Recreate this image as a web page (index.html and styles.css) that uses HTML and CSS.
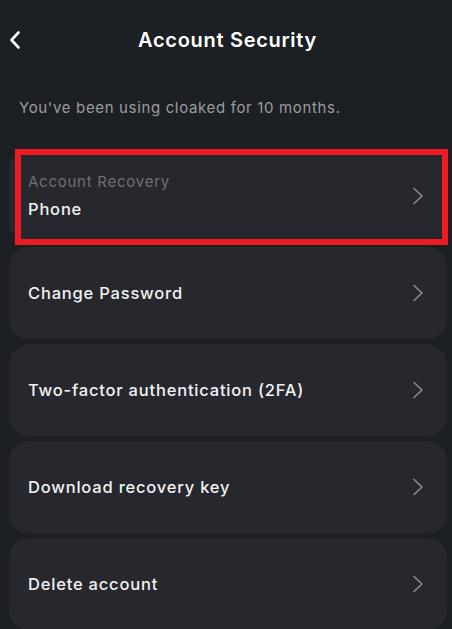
FILE: index.html
```html
<!DOCTYPE html>
<html lang="en">
<head>
<meta charset="utf-8">
<title>Account Security</title>
<link rel="stylesheet" href="styles.css">
</head>
<body>
<div class="screen">
  <header class="topbar">
    <button class="back" aria-label="Back">
      <svg width="14" height="20" viewBox="0 0 14 20"><path d="M10.5 2.5 L3.5 10 L10.5 17.5" fill="none" stroke="#ffffff" stroke-width="2.6" stroke-linecap="round" stroke-linejoin="round"/></svg>
    </button>
    <h1 class="title">Account Security</h1>
  </header>
  <p class="note">You've been using cloaked for 10 months.</p>
  <ul class="list">
    <li class="item item-highlight">
      <div class="item-text">
        <span class="item-label">Account Recovery</span>
        <span class="item-title">Phone</span>
      </div>
      <svg class="chev" width="12" height="18" viewBox="0 0 12 18"><path d="M2 1.5 L10 9 L2 16.5" fill="none" stroke="#8b8d91" stroke-width="1.6" stroke-linecap="round" stroke-linejoin="round"/></svg>
      <span class="marker"></span>
    </li>
    <li class="item">
      <div class="item-text"><span class="item-title">Change Password</span></div>
      <svg class="chev" width="12" height="18" viewBox="0 0 12 18"><path d="M2 1.5 L10 9 L2 16.5" fill="none" stroke="#8b8d91" stroke-width="1.6" stroke-linecap="round" stroke-linejoin="round"/></svg>
    </li>
    <li class="item">
      <div class="item-text"><span class="item-title">Two-factor authentication (2FA)</span></div>
      <svg class="chev" width="12" height="18" viewBox="0 0 12 18"><path d="M2 1.5 L10 9 L2 16.5" fill="none" stroke="#8b8d91" stroke-width="1.6" stroke-linecap="round" stroke-linejoin="round"/></svg>
    </li>
    <li class="item">
      <div class="item-text"><span class="item-title">Download recovery key</span></div>
      <svg class="chev" width="12" height="18" viewBox="0 0 12 18"><path d="M2 1.5 L10 9 L2 16.5" fill="none" stroke="#8b8d91" stroke-width="1.6" stroke-linecap="round" stroke-linejoin="round"/></svg>
    </li>
    <li class="item">
      <div class="item-text"><span class="item-title">Delete account</span></div>
      <svg class="chev" width="12" height="18" viewBox="0 0 12 18"><path d="M2 1.5 L10 9 L2 16.5" fill="none" stroke="#8b8d91" stroke-width="1.6" stroke-linecap="round" stroke-linejoin="round"/></svg>
    </li>
  </ul>
</div>
</body>
</html>
```
FILE: styles.css
```css
html, body {
  margin: 0;
  padding: 0;
  background: #1c1f23;
}
body {
  font-family: "Inter", "Noto Sans", "DejaVu Sans", sans-serif;
  color: #ffffff;
  overflow: hidden;
}
.screen {
  width: 452px;
  height: 629px;
  overflow: hidden;
}
.topbar {
  height: 80px;
  display: flex;
  align-items: center;
  justify-content: center;
  position: relative;
}
.back {
  position: absolute;
  left: 8px;
  top: 30px;
  background: none;
  border: 0;
  padding: 0;
  width: 14px;
  height: 20px;
  display: flex;
}
.title {
  margin: 0;
  font-size: 20px;
  font-weight: 600;
  letter-spacing: 0.7px;
  padding-left: 3px;
}
.note {
  margin: 18px 0 0 19px;
  height: 20px;
  line-height: 20px;
  font-size: 15px;
  color: #9b9c9f;
  letter-spacing: 0.65px;
}
.list {
  list-style: none;
  margin: 32px 5px 0 9px;
  padding: 0;
  display: flex;
  flex-direction: column;
  gap: 5px;
}
.item {
  position: relative;
  height: 92px;
  background: #26282d;
  border-radius: 20px;
  display: flex;
  align-items: center;
  justify-content: space-between;
  padding: 0 23px 0 19px;
  box-sizing: border-box;
}
.item-text {
  display: flex;
  flex-direction: column;
  gap: 8px;
}
.item-label {
  font-size: 15px;
  color: #6e7074;
  letter-spacing: 0.75px;
}
.item-title {
  font-size: 16.5px;
  font-weight: 500;
  color: #f2f2f3;
  letter-spacing: 0.8px;
}
.item-highlight .item-text {
  margin-top: -1px;
}
.chev {
  display: block;
}
.marker {
  position: absolute;
  top: -1px;
  left: 6px;
  right: -1px;
  bottom: -3px;
  border: 6px solid #ed1c24;
  pointer-events: none;
}
```
